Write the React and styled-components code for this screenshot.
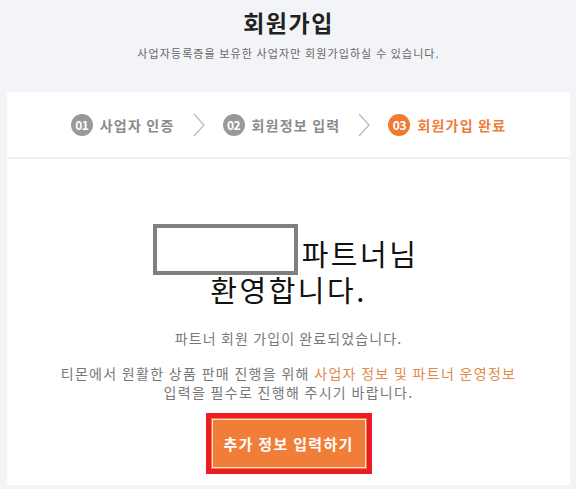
import React from "react";
import styled, { createGlobalStyle } from "styled-components";

const GlobalStyle = createGlobalStyle`
    html, body {
        margin: 0;
        padding: 0;
        background: #f3f4f7;
        font-family: "Noto Sans CJK KR", "Noto Sans", sans-serif;
    }
`;

const steps = [
    { no: "01", label: "사업자 인증" },
    { no: "02", label: "회원정보 입력" },
    { no: "03", label: "회원가입 완료", active: true },
];

const App = () => {
    return (
        <>
            <GlobalStyle />
            <Page>
                <Header>
                    <Title>회원가입</Title>
                    <SubTitle>사업자등록증을 보유한 사업자만 회원가입하실 수 있습니다.</SubTitle>
                </Header>
                <StepBar>
                    {steps.map((s, i) => (
                        <React.Fragment key={s.no}>
                            {i > 0 && <Chevron />}
                            <Step active={s.active}>
                                <StepNo active={s.active}>{s.no}</StepNo>
                                {s.label}
                            </Step>
                        </React.Fragment>
                    ))}
                </StepBar>
                <Content>
                    <NameRow>
                        <NameBox />
                        <Welcome lift="6px">파트너님</Welcome>
                    </NameRow>
                    <Welcome>환영합니다.</Welcome>
                    <Message top="24px">파트너 회원 가입이 완료되었습니다.</Message>
                    <Message top="16px" wide>
                        티몬에서 원활한 상품 판매 진행을 위해 <Highlight>사업자 정보 및 파트너 운영정보</Highlight>
                        <br />
                        입력을 필수로 진행해 주시기 바랍니다.
                    </Message>
                    <ButtonFrame>
                        <MoreButton>추가 정보 입력하기</MoreButton>
                    </ButtonFrame>
                </Content>
            </Page>
        </>
    );
};

export default App;

const Chevron = () => (
    <ChevronIcon width="12" height="24" viewBox="0 0 12 24">
        <path d="M1 1 L11 12 L1 23" fill="none" stroke="#b9b9b9" strokeWidth="1.2" />
    </ChevronIcon>
);

const Page = styled.div`
    display: flex;
    flex-direction: column;
    padding: 0 6px 0 7px;
`;

const Header = styled.div`
    display: flex;
    flex-direction: column;
    align-items: center;
    padding: 6px 0 31px;
`;

const Title = styled.h1`
    margin: 0;
    font-size: 23px;
    line-height: 32px;
    font-weight: 700;
    color: #222;
    letter-spacing: 1.5px;
`;

const SubTitle = styled.p`
    margin: 7px 0 0;
    font-size: 11px;
    line-height: 16px;
    color: #666;
    letter-spacing: 1.1px;
`;

const StepBar = styled.div`
    display: flex;
    align-items: center;
    justify-content: center;
    gap: 18px;
    height: 65px;
    background: #fff;
    border-bottom: 2px solid #eef0f3;
`;

const Step = styled.div`
    display: flex;
    align-items: center;
    gap: 7px;
    font-size: 14px;
    font-weight: 700;
    letter-spacing: 1.2px;
    color: ${(props) => (props.active ? "#ee7d3c" : "#8a8a8a")};
`;

const StepNo = styled.span`
    display: flex;
    align-items: center;
    justify-content: center;
    width: 22px;
    height: 22px;
    border-radius: 50%;
    background: ${(props) => (props.active ? "#f07a31" : "#999")};
    color: #fff;
    font-size: 12px;
    font-weight: 700;
    letter-spacing: -0.5px;
`;

const ChevronIcon = styled.svg`
    display: block;
`;

const Content = styled.div`
    display: flex;
    flex-direction: column;
    align-items: center;
    background: #fff;
    padding: 65px 0 11px;
`;

const NameRow = styled.div`
    display: flex;
    align-items: flex-end;
    gap: 4px;
    margin: 0 0 -2px -6px;
`;

const NameBox = styled.div`
    width: 137px;
    height: 43px;
    border: 4px solid #808080;
`;

const Welcome = styled.div`
    margin-bottom: ${(props) => props.lift || "0"};
    font-size: 29px;
    line-height: 32px;
    color: #111;
    letter-spacing: 2.5px;
`;

const Message = styled.p`
    margin: ${(props) => props.top} 0 0;
    font-size: 14px;
    line-height: 19px;
    color: #777;
    text-align: center;
    letter-spacing: ${(props) => (props.wide ? "1.3px" : "1.1px")};
`;

const Highlight = styled.span`
    color: #e08a4c;
`;

const ButtonFrame = styled.div`
    margin-top: 11px;
    border: 5px solid #ec1c24;
`;

const MoreButton = styled.button`
    display: block;
    width: 156px;
    height: 51px;
    border: none;
    background: #f07e38;
    box-shadow: inset 0 0 0 1px #f07e38, inset 0 0 0 2px #fbe3d3;
    color: #fff;
    font-family: inherit;
    font-size: 15px;
    font-weight: 700;
    letter-spacing: 1.3px;
    cursor: pointer;
`;
